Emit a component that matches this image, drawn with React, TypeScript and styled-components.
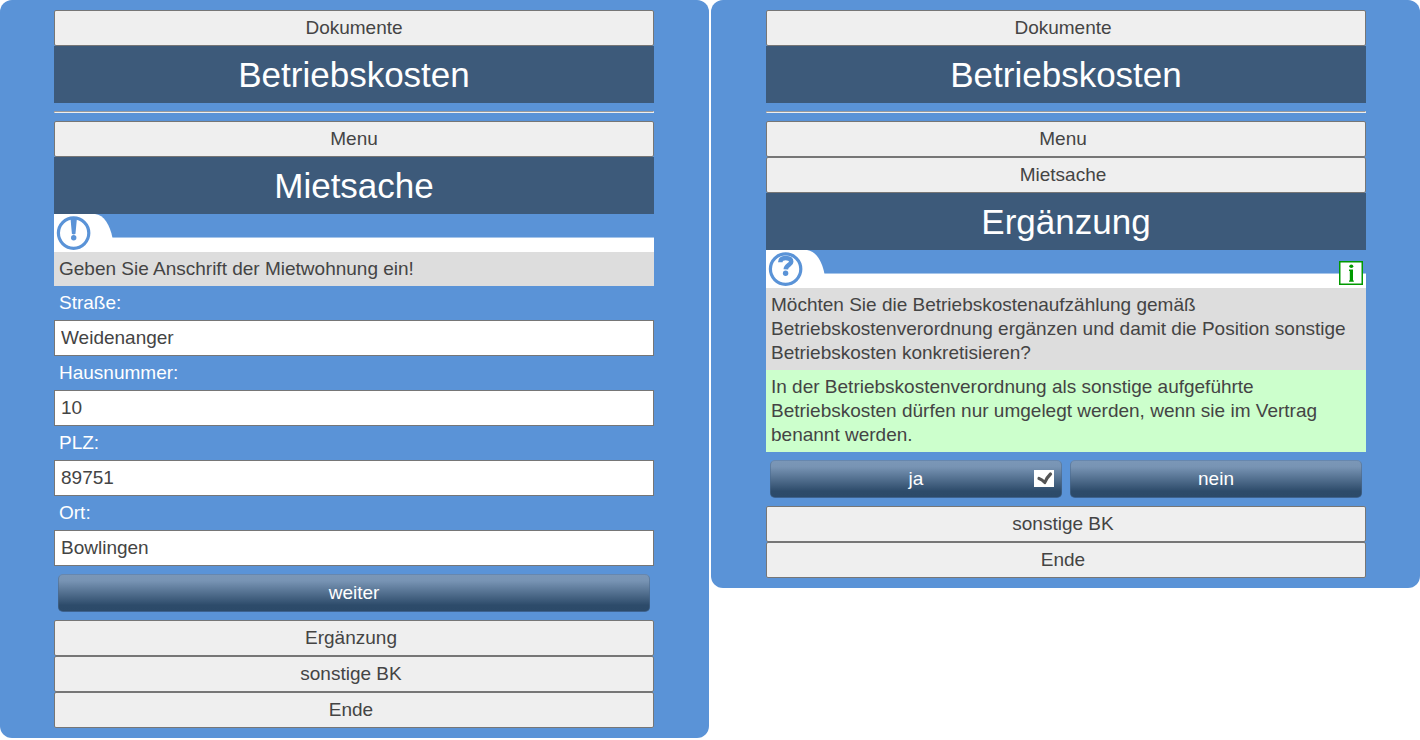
import React, { useId, useState } from 'react';
import styled, { createGlobalStyle, css } from 'styled-components';

const GlobalStyle = createGlobalStyle`
  *, *::before, *::after { box-sizing: border-box; }
  body {
    margin: 0;
    background: #fff;
    color: #444;
    font: 19px/24px Arial, "Liberation Sans", sans-serif;
  }
  button, input { font: inherit; color: inherit; }
`;

const Page = styled.main`
  display: grid;
  grid-template-columns: repeat(2, minmax(0, 1fr));
  align-items: start;
  gap: 2px;
`;

const Panel = styled.section`
  display: flex;
  flex-direction: column;
  padding: 10px 54px 10px 55px;
  border-radius: 12px;
  background: #5a93d7;

  &:first-child { padding: 10px 55px 10px 54px; }
`;

const Nav = styled.nav<{ $centered?: boolean }>`
  display: flex;
  flex-direction: column;
  --label-inset: ${(p) => (p.$centered ? '0' : '6px')};
`;

const NavButton = styled.button`
  height: 36px;
  padding: 0 var(--label-inset) 0 0;
  border: 1px solid #767676;
  border-radius: 2px;
  background: #efefef;
  text-align: center;
  cursor: pointer;
`;

const bannerStyle = css`
  margin: 0;
  padding: 9px 0 8px;
  background: #3d5a7a;
  color: #fff;
  font-size: 35px;
  font-weight: 400;
  line-height: 40px;
  text-align: center;
`;
const Title = styled.h1`${bannerStyle}`;
const Subtitle = styled.h2`${bannerStyle}`;

const Divider = styled.hr`
  width: 100%;
  margin: 8px 0;
  border: 1px inset #eee;
`;

const Strip = styled.div`
  position: relative;
  height: 38px;
  background: linear-gradient(transparent 23px, #a5c5ea 23px, #a5c5ea 24px, #fff 24px);

  > svg { display: block; }
`;

const InfoButton = styled.button`
  position: absolute;
  top: 11px;
  right: 3px;
  width: 24px;
  height: 24px;
  padding: 0;
  border: 0;
  background: #fff;
  cursor: pointer;

  svg { display: block; }
`;

const Message = styled.p<{ $hint?: boolean }>`
  margin: 0;
  padding: 5px;
  background: ${(p) => (p.$hint ? '#ccffcc' : '#dddddd')};
`;

const Form = styled.form`
  display: flex;
  flex-direction: column;
`;

const Label = styled.label`
  padding: 5px;
  color: #fff;
`;

const Input = styled.input`
  width: 100%;
  height: 36px;
  padding: 0 6px;
  border: 1px solid #767676;
  border-radius: 0;
  background: #fff;
`;

const Actions = styled.div`
  display: flex;
  gap: 8px;
  padding: 8px 4px;
`;

const ActionButton = styled.button`
  position: relative;
  flex: 1;
  height: 38px;
  padding: 0;
  border: 1px solid;
  border-color: #6787ae #48699188 #3d628f;
  border-radius: 5px;
  background: linear-gradient(#7b97b7 0%, #7894b4 16%, #2d4b6a 84%, #2c4a69 100%);
  color: #fff;
  cursor: pointer;
`;

const CheckMark = styled.svg`
  position: absolute;
  top: 9px;
  right: 7px;
  width: 20px;
  height: 17px;
`;

function TabStrip({ kind, children }: { kind: 'notice' | 'question'; children?: React.ReactNode }) {
  return (
    <Strip>
      <svg width="60" height="38" viewBox="0 0 60 38" aria-hidden="true">
        <path d="M0 0H41C50 1 56 11 58.5 24V38H0Z" fill="#fff" />
        <circle cx="19.6" cy="19.1" r="15.2" fill="none" stroke="#5a93d7" strokeWidth="3.2" />
        {kind === 'notice' ? (
          <>
            <path d="M16.5 4.5H22.9L21.5 19.8Q19.7 21.2 17.9 19.8Z" fill="#5a93d7" />
            <circle cx="19.7" cy="23.8" r="2.7" fill="#5a93d7" />
          </>
        ) : (
          <>
            <path
              d="M14.3 12.2C14.3 9 16.6 8 19.6 8C23 8 25.2 9.3 25.2 11.8C25.2 15 20 15 19.8 19.3"
              fill="none"
              stroke="#5a93d7"
              strokeWidth="4.6"
            />
            <circle cx="19.6" cy="23.3" r="2.7" fill="#5a93d7" />
          </>
        )}
      </svg>
      {children}
    </Strip>
  );
}

function InfoIcon() {
  return (
    <svg width="24" height="24" viewBox="0 0 24 24" aria-hidden="true">
      <rect x="0.75" y="0.75" width="22.5" height="22.5" fill="#fff" stroke="#009900" strokeWidth="1.5" />
      <ellipse cx="12.3" cy="5.3" rx="2" ry="1.7" fill="#009900" />
      <path d="M10 8.5H14V19.5H14.8V20.8H10V19.5H10.8V10H10Z" fill="#009900" />
    </svg>
  );
}

function TextField({ label, initial }: { label: string; initial: string }) {
  const id = useId();
  const [value, setValue] = useState(initial);
  return (
    <>
      <Label htmlFor={id}>{label}</Label>
      <Input id={id} value={value} onChange={(e) => setValue(e.target.value)} />
    </>
  );
}

function Steps({ items, centered }: { items: string[]; centered?: boolean }) {
  return (
    <Nav $centered={centered}>
      {items.map((item) => (
        <NavButton key={item} type="button">{item}</NavButton>
      ))}
    </Nav>
  );
}

export default function App() {
  const [answer, setAnswer] = useState('ja');
  return (
    <>
      <GlobalStyle />
      <Page>
        <Panel>
          <Steps centered items={['Dokumente']} />
          <Title>Betriebskosten</Title>
          <Divider />
          <Steps centered items={['Menu']} />
          <Subtitle>Mietsache</Subtitle>
          <TabStrip kind="notice" />
          <Message>Geben Sie Anschrift der Mietwohnung ein!</Message>
          <Form onSubmit={(e) => e.preventDefault()}>
            <TextField label="Straße:" initial="Weidenanger" />
            <TextField label="Hausnummer:" initial="10" />
            <TextField label="PLZ:" initial="89751" />
            <TextField label="Ort:" initial="Bowlingen" />
            <Actions>
              <ActionButton type="submit">weiter</ActionButton>
            </Actions>
          </Form>
          <Steps items={['Ergänzung', 'sonstige BK', 'Ende']} />
        </Panel>

        <Panel>
          <Steps items={['Dokumente']} />
          <Title>Betriebskosten</Title>
          <Divider />
          <Steps items={['Menu', 'Mietsache']} />
          <Subtitle>Ergänzung</Subtitle>
          <TabStrip kind="question">
            <InfoButton type="button" aria-label="Information">
              <InfoIcon />
            </InfoButton>
          </TabStrip>
          <Message>
            Möchten Sie die Betriebskostenaufzählung gemäß Betriebskostenverordnung ergänzen und
            damit die Position sonstige Betriebskosten konkretisieren?
          </Message>
          <Message $hint>
            In der Betriebskostenverordnung als sonstige aufgeführte Betriebskosten dürfen nur
            umgelegt werden, wenn sie im Vertrag benannt werden.
          </Message>
          <Actions>
            {['ja', 'nein'].map((option) => (
              <ActionButton
                key={option}
                type="button"
                aria-pressed={answer === option}
                onClick={() => setAnswer(option)}
              >
                {option}
                {answer === option && (
                  <CheckMark viewBox="0 0 20 17" aria-hidden="true">
                    <rect width="20" height="17" fill="#fff" />
                    <path
                      d="M5 8.5Q8 9.5 10.8 12.5Q12.8 7.5 16.5 4"
                      fill="none"
                      stroke="#555"
                      strokeWidth="3.2"
                      strokeLinecap="round"
                      strokeLinejoin="round"
                    />
                  </CheckMark>
                )}
              </ActionButton>
            ))}
          </Actions>
          <Steps items={['sonstige BK', 'Ende']} />
        </Panel>
      </Page>
    </>
  );
}
